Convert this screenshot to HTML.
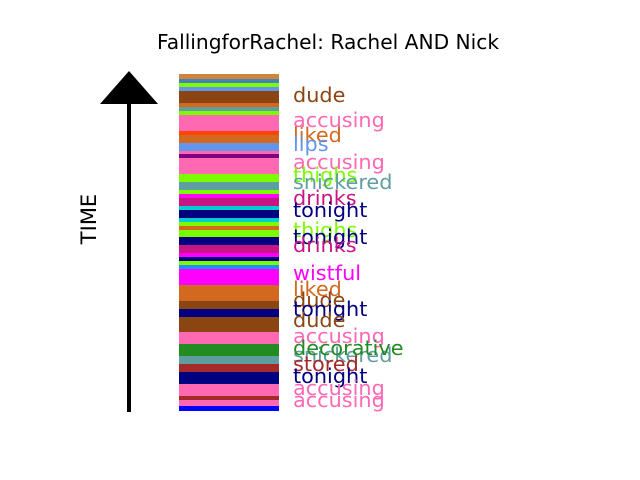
<!DOCTYPE html>
<html><head><style>body{margin:0;background:#fff}svg{display:block}</style></head><body>
<svg width="640" height="480" xmlns="http://www.w3.org/2000/svg" font-family="DejaVu Sans, Liberation Sans, sans-serif">
<rect width="640" height="480" fill="#fff"/>
<text x="328" y="49" font-size="20.2" text-anchor="middle" fill="#000">FallingforRachel: Rachel AND Nick</text>
<text transform="translate(96,219) rotate(-90)" font-size="21" text-anchor="middle" fill="#000">TIME</text>
<rect x="127" y="100" width="4" height="312" fill="#000"/>
<polygon points="100,104 158,104 129,71" fill="#000"/>
<g>
<rect x="179" y="74" width="100" height="5" fill="#cd853f"/>
<rect x="179" y="79" width="100" height="4" fill="#4682b4"/>
<rect x="179" y="83" width="100" height="4" fill="#7cfc00"/>
<rect x="179" y="87" width="100" height="4" fill="#6495ed"/>
<rect x="179" y="91" width="100" height="12" fill="#8b4513"/>
<rect x="179" y="103" width="100" height="4" fill="#d2691e"/>
<rect x="179" y="107" width="100" height="4" fill="#5f9ea0"/>
<rect x="179" y="111" width="100" height="4" fill="#7cfc00"/>
<rect x="179" y="115" width="100" height="16" fill="#ff69b4"/>
<rect x="179" y="131" width="100" height="4" fill="#ff4500"/>
<rect x="179" y="135" width="100" height="8" fill="#d2691e"/>
<rect x="179" y="143" width="100" height="8" fill="#6495ed"/>
<rect x="179" y="151" width="100" height="3" fill="#ff69b4"/>
<rect x="179" y="154" width="100" height="4" fill="#800080"/>
<rect x="179" y="158" width="100" height="16" fill="#ff69b4"/>
<rect x="179" y="174" width="100" height="8" fill="#7cfc00"/>
<rect x="179" y="182" width="100" height="8" fill="#5f9ea0"/>
<rect x="179" y="190" width="100" height="4" fill="#7cfc00"/>
<rect x="179" y="194" width="100" height="4" fill="#ff00ff"/>
<rect x="179" y="198" width="100" height="8" fill="#c71585"/>
<rect x="179" y="206" width="100" height="4" fill="#00ced1"/>
<rect x="179" y="210" width="100" height="8" fill="#000080"/>
<rect x="179" y="218" width="100" height="4" fill="#00ced1"/>
<rect x="179" y="222" width="100" height="4" fill="#7cfc00"/>
<rect x="179" y="226" width="100" height="4" fill="#d2691e"/>
<rect x="179" y="230" width="100" height="7" fill="#7cfc00"/>
<rect x="179" y="237" width="100" height="8" fill="#000080"/>
<rect x="179" y="245" width="100" height="8" fill="#c71585"/>
<rect x="179" y="253" width="100" height="4" fill="#ff00ff"/>
<rect x="179" y="257" width="100" height="4" fill="#000080"/>
<rect x="179" y="261" width="100" height="4" fill="#7cfc00"/>
<rect x="179" y="265" width="100" height="4" fill="#1e90ff"/>
<rect x="179" y="269" width="100" height="16" fill="#ff00ff"/>
<rect x="179" y="285" width="100" height="16" fill="#d2691e"/>
<rect x="179" y="301" width="100" height="8" fill="#8b4513"/>
<rect x="179" y="309" width="100" height="8" fill="#000080"/>
<rect x="179" y="317" width="100" height="15" fill="#8b4513"/>
<rect x="179" y="332" width="100" height="12" fill="#ff69b4"/>
<rect x="179" y="344" width="100" height="12" fill="#228b22"/>
<rect x="179" y="356" width="100" height="8" fill="#5f9ea0"/>
<rect x="179" y="364" width="100" height="8" fill="#a52a2a"/>
<rect x="179" y="372" width="100" height="12" fill="#000080"/>
<rect x="179" y="384" width="100" height="12" fill="#ff69b4"/>
<rect x="179" y="396" width="100" height="4" fill="#a52a2a"/>
<rect x="179" y="400" width="100" height="6" fill="#ff69b4"/>
<rect x="179" y="406" width="100" height="5" fill="#0000ff"/>
</g>
<g font-size="20.8">
<text x="293" y="102" fill="#8b4513">dude</text>
<text x="293" y="127" fill="#ff69b4">accusing</text>
<text x="293" y="142" fill="#d2691e">liked</text>
<text x="293" y="151" fill="#6495ed">lips</text>
<text x="293" y="169" fill="#ff69b4">accusing</text>
<text x="293" y="182" fill="#7cfc00">thighs</text>
<text x="293" y="189" fill="#5f9ea0">snickered</text>
<text x="293" y="205" fill="#c71585">drinks</text>
<text x="293" y="217" fill="#000080">tonight</text>
<text x="293" y="237" fill="#7cfc00">thighs</text>
<text x="293" y="244" fill="#000080">tonight</text>
<text x="293" y="252" fill="#c71585">drinks</text>
<text x="293" y="280" fill="#ff00ff">wistful</text>
<text x="293" y="296" fill="#d2691e">liked</text>
<text x="293" y="307" fill="#8b4513">dude</text>
<text x="293" y="316" fill="#000080">tonight</text>
<text x="293" y="327" fill="#8b4513">dude</text>
<text x="293" y="343" fill="#ff69b4">accusing</text>
<text x="293" y="362" fill="#5f9ea0">snickered</text>
<text x="293" y="355" fill="#228b22">decorative</text>
<text x="293" y="371" fill="#a52a2a">stored</text>
<text x="293" y="383" fill="#000080">tonight</text>
<text x="293" y="395" fill="#ff69b4">accusing</text>
<text x="293" y="407" fill="#ff69b4">accusing</text>
</g>
</svg>
</body></html>
